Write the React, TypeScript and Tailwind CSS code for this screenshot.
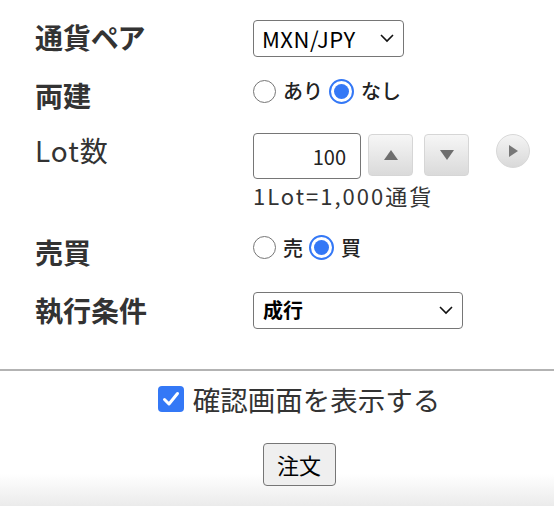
import React, { useState } from 'react';

const font = "font-['Noto_Sans_CJK_JP','Noto_Sans',sans-serif]";
const labelCls = "w-[218px] text-[28px] font-bold leading-[36px] [font-feature-settings:'palt']";

function Radio({ checked, label, onClick }: { checked: boolean; label: string; onClick: () => void }) {
  return (
    <label className="flex items-center cursor-pointer" onClick={onClick}>
      {checked ? (
        <span className="w-[25px] h-[25px] rounded-full border-[2.5px] border-[#3478f6] bg-white flex items-center justify-center">
          <span className="w-[15px] h-[15px] rounded-full bg-[#3478f6]" />
        </span>
      ) : (
        <span className="w-[23px] h-[23px] rounded-full border-[1.5px] border-[#767676] bg-white" />
      )}
      <span className="ml-[7px] mr-[6px] text-[20px] font-medium leading-[26px] text-[#222]">{label}</span>
    </label>
  );
}

function Chevron() {
  return (
    <svg width="16" height="10" viewBox="0 0 16 10" className="pointer-events-none">
      <path d="M2 2 L8 8 L14 2" fill="none" stroke="#111" strokeWidth="1.6" />
    </svg>
  );
}

function ArrowButton({ dir }: { dir: 'up' | 'down' }) {
  return (
    <button className="w-[45px] h-[42px] rounded-[4px] border border-[#d6d6d6] bg-[linear-gradient(to_bottom,#f6f6f6,#dadada)] flex items-center justify-center">
      <svg width="16" height="12" viewBox="0 0 16 12">
        {dir === 'up' ? <path d="M8 1 L15 11 L1 11 Z" fill="#6e6e6e" /> : <path d="M1 1 L15 1 L8 11 Z" fill="#6e6e6e" />}
      </svg>
    </button>
  );
}

export default function App() {
  const [ryodate, setRyodate] = useState(false);
  const [side, setSide] = useState<'sell' | 'buy'>('buy');
  const [lot, setLot] = useState(100);
  const [confirm, setConfirm] = useState(true);

  return (
    <div className={`w-[554px] h-[506px] flex flex-col bg-white text-[#333] ${font}`}>
      {/* form rows */}
      <div className="pl-[35px] pt-[14px] flex flex-col">
        <div className="h-[48px] flex items-center">
          <div className={`${labelCls} pb-[2px]`}>通貨ペア</div>
          <div className="w-[151px] h-[37px] rounded-[4px] border border-[#767676] flex items-center justify-between pl-[8px] pr-[8px] text-[22px] tracking-[0.5px] text-black">
            <span>MXN/JPY</span>
            <Chevron />
          </div>
        </div>

        <div className="h-[58px] flex items-center">
          <div className={`${labelCls} pt-[8px]`}>両建</div>
          <div className="flex items-center">
            <Radio checked={ryodate} label="あり" onClick={() => setRyodate(true)} />
            <Radio checked={!ryodate} label="なし" onClick={() => setRyodate(false)} />
          </div>
        </div>

        <div className="h-[100px] flex items-start">
          <div className="w-[218px] text-[28px] leading-[36px] tracking-[1px] mt-[12px]">Lot数</div>
          <div className="mt-[13px] flex flex-col">
            <div className="flex items-start">
              <input
                value={lot}
                onChange={(e) => setLot(Number(e.target.value) || 0)}
                className="w-[108px] h-[46px] rounded-[4px] border border-[#767676] text-right pr-[14px] text-[20px] text-[#222] outline-none"
              />
              <div className="ml-[7px] mt-[1px] flex gap-[11px]">
                <ArrowButton dir="up" />
                <ArrowButton dir="down" />
              </div>
              <button className="ml-[27px] mt-[1px] w-[34px] h-[34px] rounded-full border border-[#d8d8d8] bg-[linear-gradient(to_bottom,#f4f4f4,#d9d9d9)] flex items-center justify-center">
                <svg width="12" height="14" viewBox="0 0 12 14">
                  <path d="M2 1 L11 7 L2 13 Z" fill="#777" />
                </svg>
              </button>
            </div>
            <div className="mt-[2px] text-[22px] leading-[28px] tracking-[2px] text-[#333]">1Lot=1,000通貨</div>
          </div>
        </div>

        <div className="h-[55px] flex items-center">
          <div className={`${labelCls} pt-[9px]`}>売買</div>
          <div className="flex items-center">
            <Radio checked={side === 'sell'} label="売" onClick={() => setSide('sell')} />
            <Radio checked={side === 'buy'} label="買" onClick={() => setSide('buy')} />
          </div>
        </div>

        <div className="h-[70px] flex items-center">
          <div className={labelCls}>執行条件</div>
          <div className="w-[210px] h-[37px] rounded-[4px] border border-[#767676] flex items-center justify-between pl-[9px] pr-[8px] text-[20px] font-bold text-black">
            <span>成行</span>
            <Chevron />
          </div>
        </div>
      </div>

      <div className="mt-[24px] border-t-2 border-[#b3b3b3]" />

      {/* confirm + submit */}
      <div className="flex-1 flex flex-col items-center pl-[44px] bg-[linear-gradient(to_bottom,#fff_76%,#ebebeb)]">
        <div className="h-[56px] flex items-center">
          <span
            onClick={() => setConfirm(!confirm)}
            className={`w-[26px] h-[26px] rounded-[4px] flex items-center justify-center cursor-pointer ${confirm ? 'bg-[#3478f6]' : 'bg-white border border-[#767676]'}`}
          >
            {confirm && (
              <svg width="18" height="16" viewBox="0 0 18 16">
                <path d="M2.5 8.5 L7 13 L15.5 2.5" fill="none" stroke="#fff" strokeWidth="3" strokeLinecap="round" strokeLinejoin="round" />
              </svg>
            )}
          </span>
          <span className="ml-[9px] text-[27.5px] leading-[36px] text-[#333]">確認画面を表示する</span>
        </div>
        <button className="mt-[16px] w-[73px] h-[43px] rounded-[4px] border border-[#767676] bg-[#efefef] text-[22px] text-black">
          注文
        </button>
      </div>
    </div>
  );
}
